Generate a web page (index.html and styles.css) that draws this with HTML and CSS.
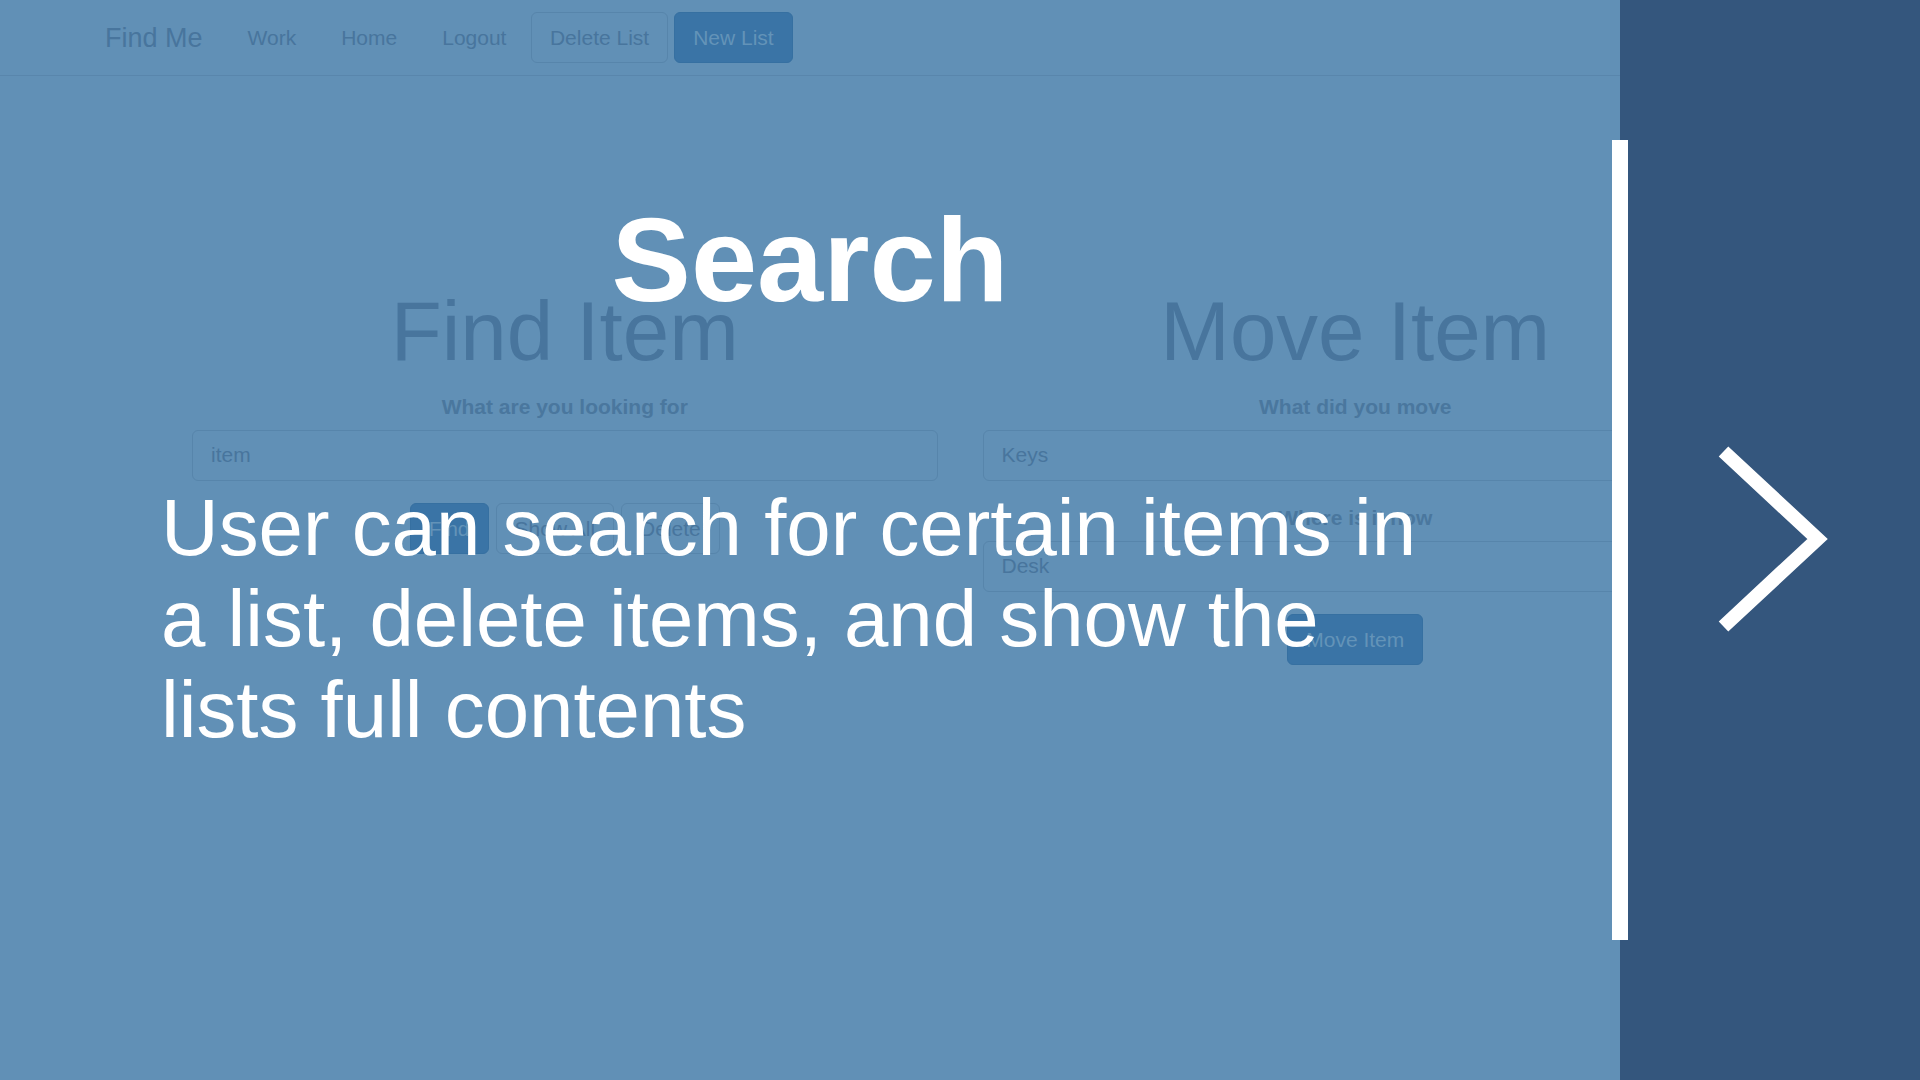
FILE: index.html
```html
<!DOCTYPE html>
<html lang="en">
<head>
<meta charset="utf-8">
<title>Find Me</title>
<link rel="stylesheet" href="styles.css">
</head>
<body>
<div class="app">
  <nav class="navbar">
    <a class="brand" href="#">Find Me</a>
    <ul class="nav-links">
      <li><a href="#">Work</a></li>
      <li><a href="#">Home</a></li>
      <li><a href="#">Logout</a></li>
    </ul>
    <div class="nav-actions">
      <button class="btn btn-default">Delete List</button>
      <button class="btn btn-primary">New List</button>
    </div>
  </nav>
  <main class="main">
    <section class="col">
      <h1 class="heading">Find Item</h1>
      <div class="group">
        <label class="label">What are you looking for</label>
        <input class="input" type="text" value="item" readonly>
      </div>
      <div class="actions">
        <button class="btn btn-primary">Find</button>
        <button class="btn btn-default">Show All</button>
        <button class="btn btn-default">Delete</button>
      </div>
    </section>
    <section class="col">
      <h1 class="heading">Move Item</h1>
      <div class="group">
        <label class="label">What did you move</label>
        <input class="input" type="text" value="Keys" readonly>
      </div>
      <div class="group">
        <label class="label">Where is it now</label>
        <input class="input" type="text" value="Desk" readonly>
      </div>
      <div class="actions">
        <button class="btn btn-primary">Move Item</button>
      </div>
    </section>
  </main>
</div>

<div class="slide">
  <div class="slide-body">
    <h2 class="slide-title">Search</h2>
    <p class="slide-text">User can search for certain items in a list, delete items, and show the lists full contents</p>
  </div>
  <aside class="slide-next">
    <div class="slide-divider"></div>
    <svg class="chevron" width="120" height="200" viewBox="0 0 120 200" aria-hidden="true">
      <polyline points="13.5,11.5 107.5,99 13.5,186.5" fill="none" stroke="#ffffff" stroke-width="14" stroke-linejoin="miter" stroke-miterlimit="10" stroke-linecap="butt"/>
    </svg>
  </aside>
</div>
</body>
</html>
```

FILE: styles.css
```css
html, body {
  margin: 0;
  padding: 0;
}

body {
  width: 1920px;
  height: 1080px;
  overflow: hidden;
  position: relative;
  background: #6190b6;
  font-family: "Liberation Sans", Arial, sans-serif;
  color: #48759d;
}

/* ---------- underlying app ---------- */
.navbar {
  height: 75px;
  border-bottom: 1.5px solid #5986ac;
  display: flex;
  align-items: center;
  padding-left: 82.5px;
}

.brand {
  padding: 0 22.5px;
  font-size: 27px;
  line-height: 30px;
  color: #48759d;
  text-decoration: none;
}

.nav-links {
  display: flex;
  list-style: none;
  margin: 0;
  padding: 0;
}

.nav-links a {
  display: block;
  padding: 0 22.5px;
  font-size: 21px;
  line-height: 30px;
  color: #48759d;
  text-decoration: none;
}

.nav-actions {
  display: flex;
  gap: 6px;
  margin-left: 2px;
}

.btn {
  font-family: inherit;
  font-size: 21px;
  line-height: 30px;
  padding: 9px 18px;
  border: 1.5px solid;
  border-radius: 6px;
  height: 51px;
  box-sizing: border-box;
  cursor: pointer;
}

.btn-default {
  background: transparent;
  border-color: #5785ab;
  color: #48759d;
}

.btn-primary {
  background: #3a74a6;
  border-color: #3670a1;
  color: #6393b8;
}

.main {
  width: 1581px;
  margin: 0 auto;
  padding-top: 210px;
  display: flex;
}

.col {
  flex: 1;
  padding: 0 22.5px;
  text-align: center;
}

.heading {
  margin: 0 0 15px;
  font-size: 83.5px;
  line-height: 91px;
  font-weight: normal;
  color: #48759d;
}

.group {
  margin-bottom: 22.5px;
}

.label {
  display: block;
  font-size: 21px;
  line-height: 30px;
  font-weight: bold;
  margin-bottom: 7.5px;
  color: #4a779e;
}

.input {
  display: block;
  width: 100%;
  height: 51px;
  box-sizing: border-box;
  padding: 9px 18px;
  border: 1.5px solid #5785ab;
  border-radius: 6px;
  background: transparent;
  font-family: inherit;
  font-size: 21px;
  line-height: 30px;
  color: #48759d;
  outline: none;
}

.actions {
  display: flex;
  justify-content: center;
  gap: 7px;
}

/* ---------- slide overlay ---------- */
.slide {
  position: absolute;
  top: 0;
  left: 0;
  width: 1920px;
  height: 1080px;
  display: flex;
}

.slide-body {
  width: 1620px;
  flex: none;
  padding-top: 200px;
  color: #ffffff;
}

.slide-title {
  margin: 0;
  text-align: center;
  font-size: 119px;
  line-height: 119px;
  font-weight: bold;
}

.slide-text {
  margin: 163px 0 0 161px;
  width: 1276px;
  font-size: 79.8px;
  line-height: 91px;
}

.slide-next {
  flex: 1;
  position: relative;
  background: #34567d;
  display: flex;
  align-items: center;
  justify-content: center;
}

.slide-divider {
  position: absolute;
  left: -8px;
  top: 140px;
  width: 16px;
  height: 800px;
  background: #ffffff;
}

.chevron {
  display: block;
}
```
